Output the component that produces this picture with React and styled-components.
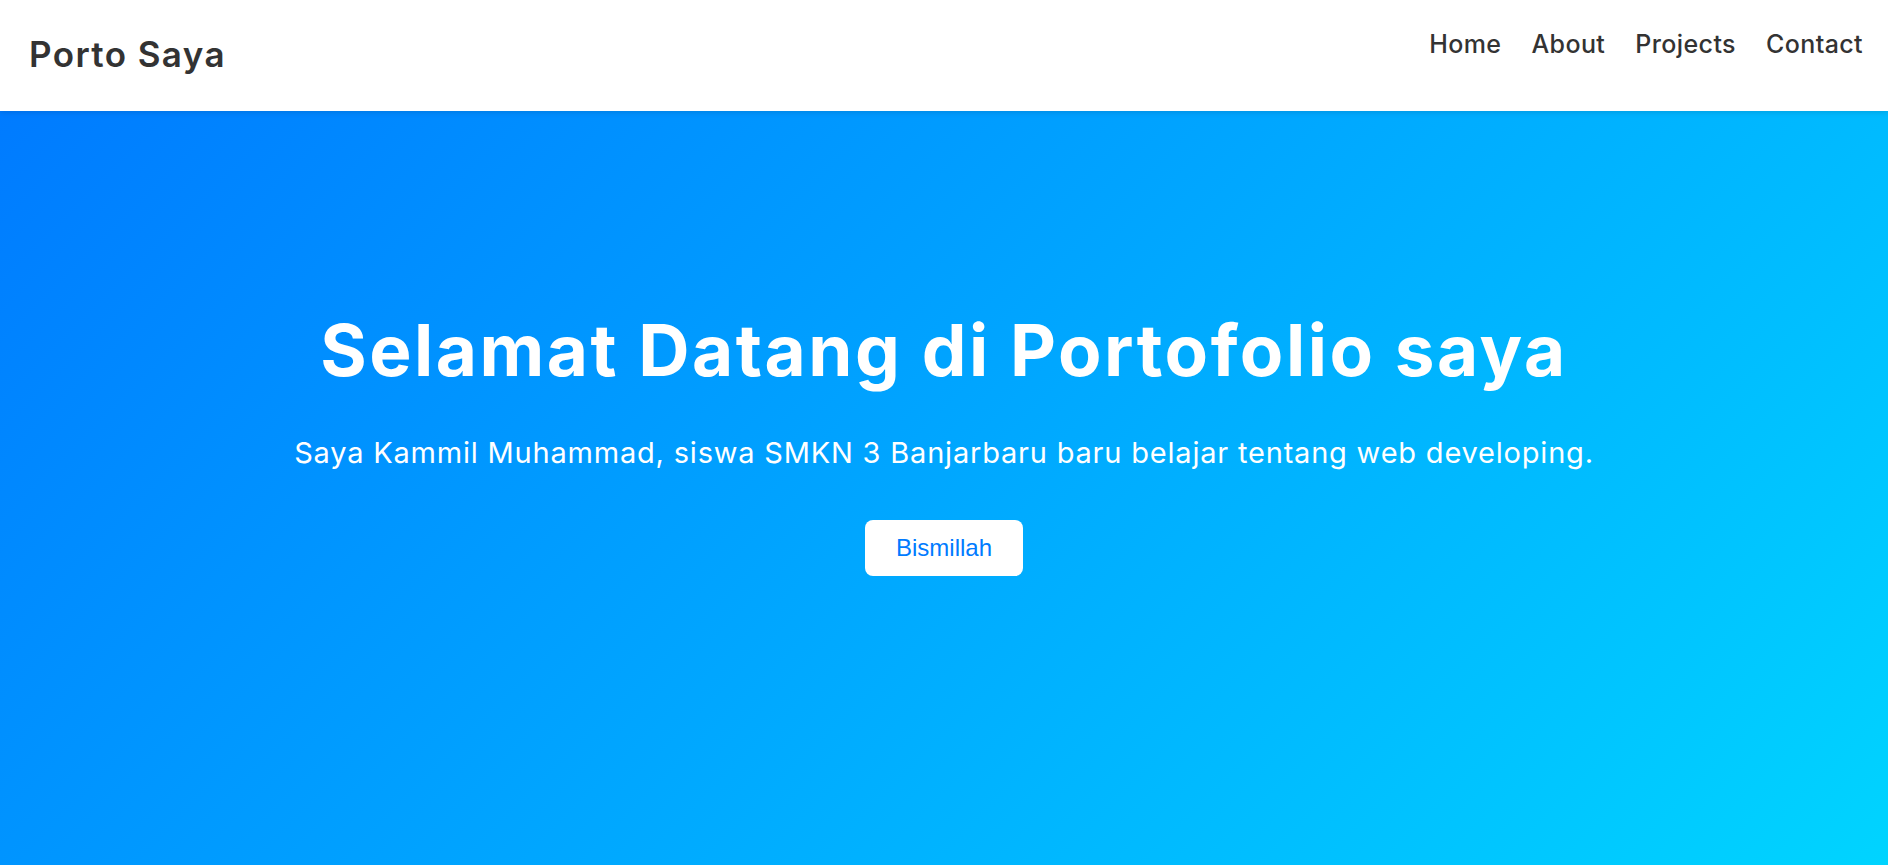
import styled, { createGlobalStyle } from 'styled-components'

const GlobalStyle = createGlobalStyle`
    * {
        box-sizing: border-box;
    }

    body {
        margin: 0;
        font-family: Inter, "Open Sans", sans-serif;
        overflow: hidden;
    }
`

const App = () => {
    const links = ['Home', 'About', 'Projects', 'Contact']

    return (
        <>
            <GlobalStyle />
            <Header>
                <Logo>Porto Saya</Logo>
                <Nav>
                    {links.map(link => (
                        <NavLink key={link} href={`#${link.toLowerCase()}`}>{link}</NavLink>
                    ))}
                </Nav>
            </Header>
            <Hero>
                <Title>Selamat Datang di Portofolio saya</Title>
                <Subtitle>Saya Kammil Muhammad, siswa SMKN 3 Banjarbaru baru belajar tentang web developing.</Subtitle>
                <Button>Bismillah</Button>
            </Hero>
        </>
    )
}

const Header = styled.header`
    position: relative;
    z-index: 1;
    height: 111px;
    padding: 0 25px 0 29px;
    display: flex;
    justify-content: space-between;
    align-items: center;
    background: #fff;
    box-shadow: 0 2px 5px rgba(0, 0, 0, 0.1);
`

const Logo = styled.h1`
    margin: 0 0 4px;
    font-size: 35px;
    font-weight: 600;
    letter-spacing: 1.4px;
    color: #333;
`

const Nav = styled.nav`
    display: flex;
    gap: 30px;
    margin-bottom: 24px;
`

const NavLink = styled.a`
    font-size: 25px;
    font-weight: 500;
    letter-spacing: 0.4px;
    color: #333;
    text-decoration: none;
`

const Hero = styled.section`
    height: 754px;
    padding-top: 190px;
    display: flex;
    flex-direction: column;
    align-items: center;
    text-align: center;
    color: #fff;
    background: linear-gradient(135deg, #007bff, #00d4ff);
`

const Title = styled.h2`
    margin: 0;
    font-size: 71px;
    font-weight: 650;
    letter-spacing: 2.5px;
    line-height: 1.4;
`

const Subtitle = styled.p`
    margin: 35px 0 0;
    font-size: 29px;
    font-weight: 400;
    letter-spacing: 0.8px;
`

const Button = styled.button`
    margin-top: 50px;
    padding: 14px 31px;
    border: none;
    border-radius: 8px;
    background: #fff;
    color: #007bff;
    font-family: "Liberation Sans", Arial, sans-serif;
    font-size: 24px;
    cursor: pointer;
`

export default App
